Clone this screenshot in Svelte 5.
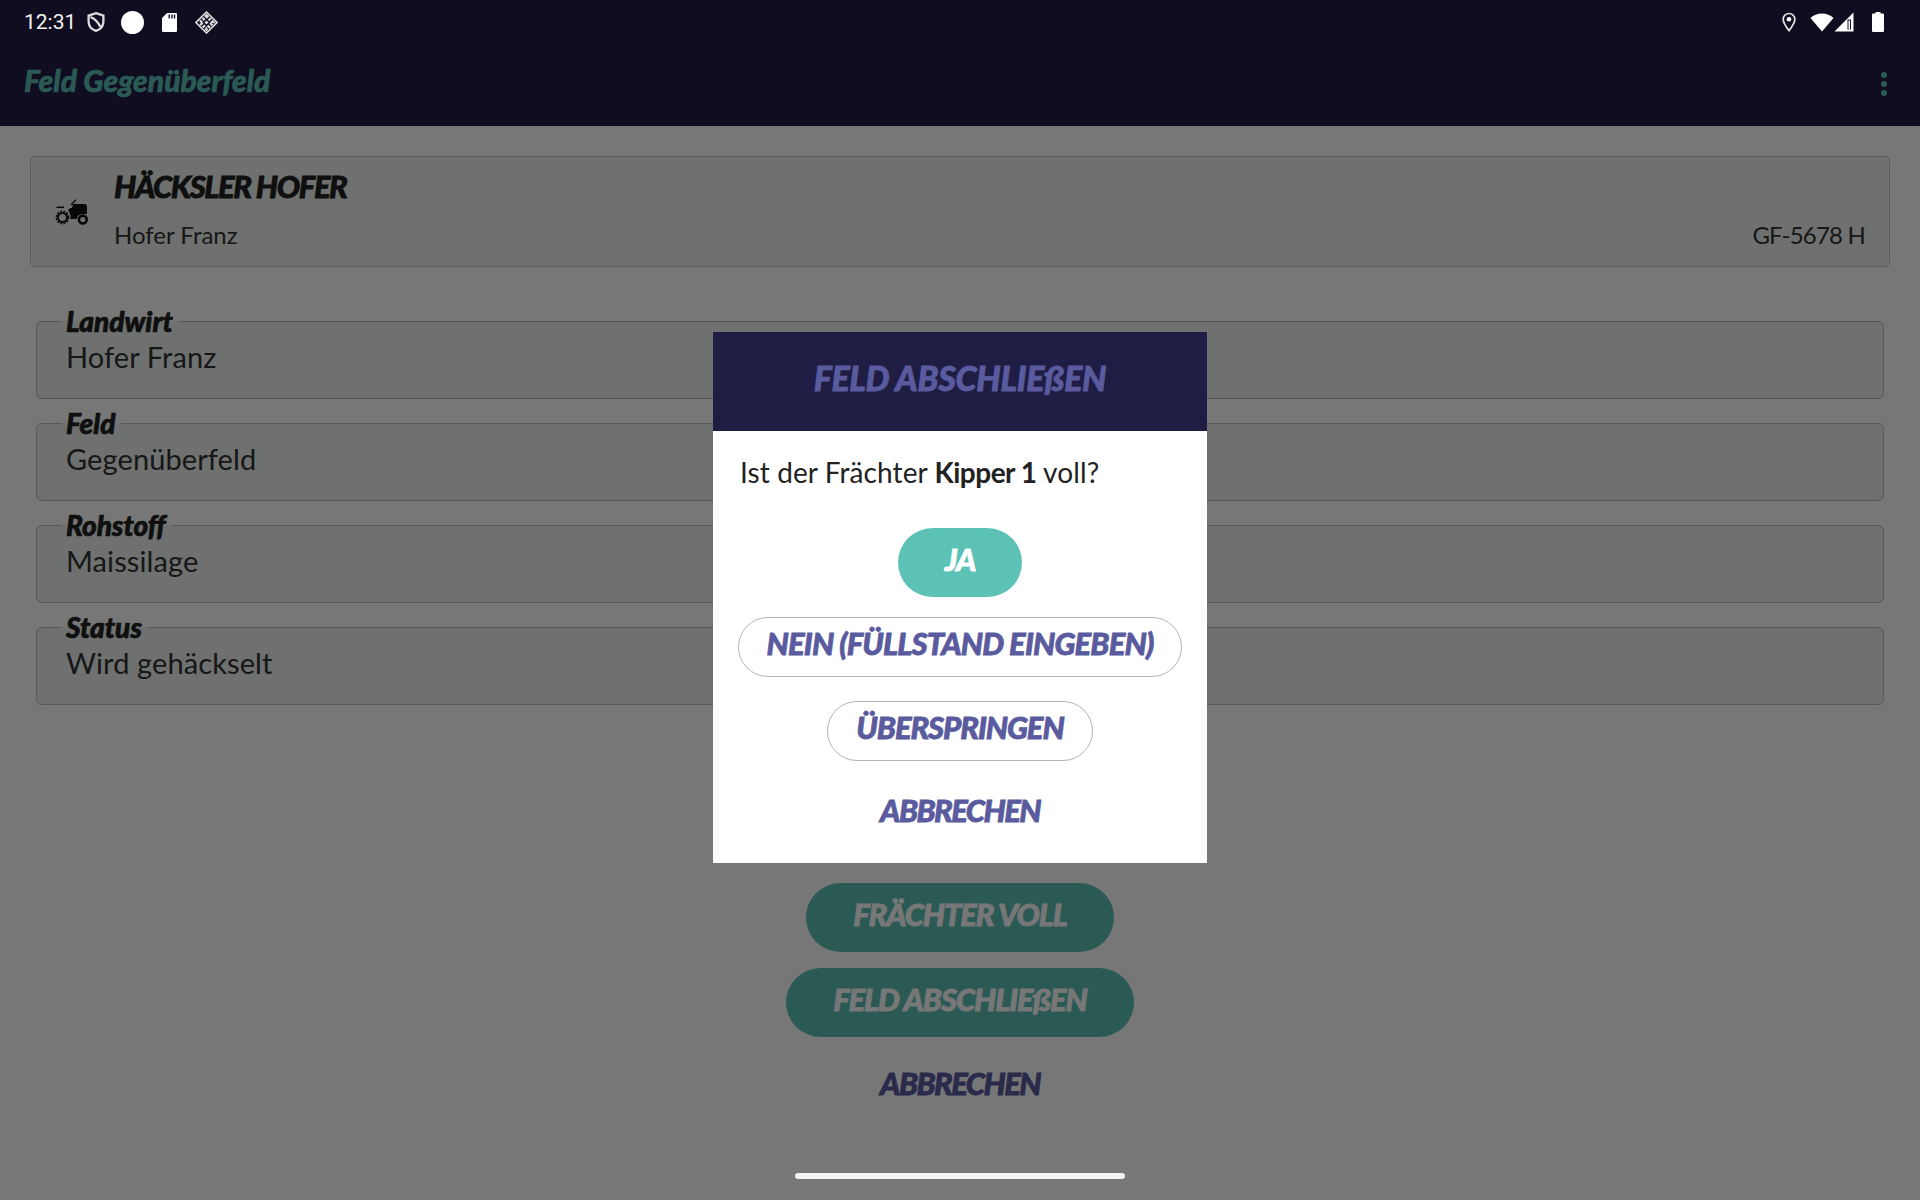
<script>
	const fields = [
		{ label: 'Landwirt', value: 'Hofer Franz' },
		{ label: 'Feld', value: 'Gegenüberfeld' },
		{ label: 'Rohstoff', value: 'Maissilage' },
		{ label: 'Status', value: 'Wird gehäckselt' }
	];
</script>

<div class="screen">
	<div class="status-bar">
		<div class="status-left">
			<span class="time">12:31</span>
			<svg class="ic-shield" viewBox="0 0 18 20" width="18" height="20">
				<path d="M9 1.200 16.400 3.600V9.500C16.400 14 13.500 17.400 9 18.800 4.500 17.400 1.600 14 1.600 9.500V3.600Z" fill="none" stroke="#dcdcdc" stroke-width="2.300" />
				<path d="M3.500 5C7.500 6.500 11 10 13.500 15" fill="none" stroke="#dcdcdc" stroke-width="2.300" />
			</svg>
			<span class="dot"></span>
			<svg class="ic-sd" viewBox="0 0 15 19" width="15" height="19">
				<path d="M5 0H14a1 1 0 0 1 1 1V18a1 1 0 0 1-1 1H1a1 1 0 0 1-1-1V5Z" fill="#fff" />
				<path d="M6.500 1.500h1.400v4H6.500zM9.200 1.500h1.400v4H9.200zM11.800 1.500h1.400v4h-1.400z" fill="#0f0e20" />
			</svg>
			<svg class="ic-diamond" viewBox="0 0 23 23" width="23" height="23">
				<path d="M11.500 1 22 11.500 11.500 22 1 11.500Z" fill="none" stroke="#dcdcdc" stroke-width="1.600" />
				<path d="M11.500 5 18 11.500 11.500 18 5 11.500Z" fill="none" stroke="#dcdcdc" stroke-width="3.400" stroke-dasharray="2.200 1.300" />
				<path d="M10 10h3v3h-3z" fill="#dcdcdc" transform="rotate(45 11.500 11.500)" />
			</svg>
		</div>
		<div class="status-right">
			<svg viewBox="0 0 14 20" width="14" height="20">
				<path d="M7 18.600C3.800 14.600 1.200 11.300 1.200 7.300a5.800 5.800 0 0 1 11.600 0C12.800 11.300 10.200 14.600 7 18.600Z" fill="none" stroke="#e4e4e4" stroke-width="1.700" />
				<circle cx="7" cy="7.300" r="2.300" fill="#fff" />
			</svg>
			<svg class="ic-wifi" viewBox="0 0 24 20" width="24" height="20">
				<path d="M12 19.500 .5 6C3.500 3 7.500 1.400 12 1.400S20.500 3 23.500 6Z" fill="#fff" />
			</svg>
			<svg class="ic-signal" viewBox="0 0 20 20" width="20" height="20">
				<path d="M19.500 .5V19.500H.5Z" fill="#fff" />
				<path d="M13.500 7.500h3.500v10H13.500z" fill="#0f0e20" />
				<path d="M14.500 8.500h1.500v9H14.500z" fill="#fff" />
			</svg>
			<svg class="ic-battery" viewBox="0 0 12 20" width="12" height="20">
				<path d="M3.500 0h5v1.500H11a1 1 0 0 1 1 1V19a1 1 0 0 1-1 1H1a1 1 0 0 1-1-1V2.500a1 1 0 0 1 1-1h2.500Z" fill="#fff" />
			</svg>
		</div>
	</div>

	<header class="app-bar">
		<span class="app-title">Feld Gegenüberfeld</span>
		<span class="menu"><i></i><i></i><i></i></span>
	</header>

	<main class="content">
		<section class="machine-card">
			<svg class="tractor" viewBox="0 0 34 26" width="34" height="26">
				<path d="M16 6 21 .8" stroke="#111" stroke-width="1.300" fill="none" />
				<path d="M1.500 8.300h7.500" stroke="#111" stroke-width="1.500" fill="none" />
				<path d="M18 5h11.500a2.500 2.500 0 0 1 2.500 2.500V15h-4.500a6.500 6.500 0 0 0-6 5H15.500C16 16 14.500 12.500 13 11.500L15 9h2Z" fill="#111" />
				<circle cx="7.500" cy="18.500" r="4.500" fill="none" stroke="#111" stroke-width="2" />
				<circle cx="7.500" cy="18.500" r="6.200" fill="none" stroke="#111" stroke-width="1.400" stroke-dasharray="2 1.250" />
				<circle cx="27.800" cy="20.500" r="3.900" fill="none" stroke="#111" stroke-width="2.600" />
			</svg>
			<div class="machine-body">
				<h2>HÄCKSLER HOFER</h2>
				<div class="machine-row">
					<span>Hofer Franz</span>
					<span class="plate">GF-5678 H</span>
				</div>
			</div>
		</section>

		<div class="fields">
			{#each fields as f}
				<fieldset>
					<legend>{f.label}</legend>
					<div class="value">{f.value}</div>
				</fieldset>
			{/each}
		</div>

		<div class="actions">
			<button class="primary" type="button">FRÄCHTER VOLL</button>
			<button class="primary" type="button">FELD ABSCHLIEßEN</button>
			<button class="link" type="button">ABBRECHEN</button>
		</div>
	</main>

	<div class="scrim">
		<div class="dialog">
			<div class="dialog-head">FELD ABSCHLIEßEN</div>
			<div class="dialog-body">
				<p>Ist der Frächter <b>Kipper 1</b> voll?</p>
				<div class="dialog-actions">
					<button class="primary ja" type="button">JA</button>
					<button class="outline long" type="button">NEIN (FÜLLSTAND EINGEBEN)</button>
					<button class="outline" type="button">ÜBERSPRINGEN</button>
					<button class="link" type="button">ABBRECHEN</button>
				</div>
			</div>
		</div>
	</div>

	<div class="home-bar"></div>
</div>

<style>
	:global(body) {
		margin: 0;
		background: #fff;
	}

	.screen {
		position: relative;
		width: 1920px;
		height: 1200px;
		overflow: hidden;
		font-family: Lato, 'Noto Sans', sans-serif;
		color: #222;
	}

	.status-bar {
		position: absolute;
		top: 0;
		left: 0;
		right: 0;
		height: 44px;
		padding: 0 36px 0 24px;
		display: flex;
		justify-content: space-between;
		align-items: center;
		z-index: 3;
	}

	.status-left,
	.status-right {
		display: flex;
		align-items: center;
	}

	.time {
		font: 21px Roboto, sans-serif;
		color: #f2f2f2;
	}

	.ic-shield {
		margin-left: 11px;
	}

	.dot {
		width: 23px;
		height: 23px;
		margin-left: 16px;
		border-radius: 50%;
		background: #fff;
	}

	.ic-sd {
		margin-left: 18px;
	}

	.ic-diamond {
		margin-left: 18px;
	}

	.ic-wifi {
		margin-left: 14px;
	}

	.ic-battery {
		margin-left: 18px;
	}

	.app-bar {
		height: 126px;
		box-sizing: border-box;
		padding: 62px 33px 0 24px;
		background: #201d44;
		display: flex;
		justify-content: space-between;
	}

	.app-title {
		font-size: 30px;
		font-weight: 900;
		font-style: italic;
		-webkit-text-stroke: 0.6px currentColor;
		color: #5cc2b5;
		line-height: 36px;
	}

	.menu {
		display: flex;
		flex-direction: column;
		gap: 3px;
		padding: 10px 0 0;
	}

	.menu i {
		display: block;
		width: 6px;
		height: 6px;
		border-radius: 50%;
		background: #5cc2b5;
	}

	.content {
		padding: 30px 30px 0;
		display: flex;
		flex-direction: column;
	}

	.machine-card {
		height: 111px;
		box-sizing: border-box;
		display: flex;
		align-items: center;
		background: #ecf2ee;
		border: 1px solid #c6c6c6;
		border-radius: 5px;
		padding: 0 24px;
	}

	.tractor {
		flex: none;
	}

	.machine-body {
		flex: 1;
		margin-left: 25px;
		padding-bottom: 6px;
	}

	h2 {
		margin: 0;
		font-size: 31px;
		font-weight: 900;
		font-style: italic;
		letter-spacing: -1.4px;
		-webkit-text-stroke: 0.8px currentColor;
		line-height: 40px;
		color: #222;
	}

	.machine-row {
		margin-top: 13px;
		display: flex;
		justify-content: space-between;
		font-size: 24px;
		line-height: 32px;
		color: #333;
	}

	.plate {
		letter-spacing: -0.8px;
	}

	.fields {
		margin: 40px 6px 0;
		display: flex;
		flex-direction: column;
		gap: 10px;
	}

	fieldset {
		margin: 0;
		height: 92px;
		box-sizing: border-box;
		padding: 0 29px;
		background: #ecf2ee;
		border: 1px solid #bdbdbd;
		border-radius: 6px;
	}

	legend {
		padding: 0 6px 0 4px;
		margin-left: -4px;
		font-size: 28px;
		line-height: 28px;
		font-weight: 900;
		font-style: italic;
		-webkit-text-stroke: 0.7px currentColor;
		color: #222;
	}

	.value {
		margin-top: 2px;
		font-size: 29px;
		letter-spacing: 0.1px;
		line-height: 40px;
		color: #333;
	}

	.actions {
		margin-top: 178px;
		display: flex;
		flex-direction: column;
		align-items: center;
		gap: 16px;
	}

	button {
		font-family: inherit;
		font-size: 31px;
		font-weight: 900;
		font-style: italic;
		letter-spacing: -1.1px;
		-webkit-text-stroke: 0.8px currentColor;
		border: 0;
		background: none;
		cursor: pointer;
		white-space: nowrap;
	}

	.primary {
		height: 69px;
		padding: 0 47px 7px;
		border-radius: 35px;
		background: #5cc2b5;
		color: #fff;
	}

	.link {
		height: 59px;
		letter-spacing: -1.6px;
		color: #5a5b9e;
	}

	.scrim {
		position: absolute;
		inset: 0;
		z-index: 2;
		background: rgba(0, 0, 0, 0.533);
		display: flex;
		justify-content: center;
		align-items: flex-start;
		padding-top: 332px;
		box-sizing: border-box;
	}

	.dialog {
		width: 494px;
		height: 531px;
		background: #fff;
	}

	.dialog-head {
		height: 99px;
		box-sizing: border-box;
		padding-bottom: 8px;
		background: #201d44;
		color: #5a5b9e;
		display: flex;
		align-items: center;
		justify-content: center;
		font-size: 34px;
		font-weight: 900;
		font-style: italic;
		letter-spacing: -0.3px;
		-webkit-text-stroke: 0.8px currentColor;
	}

	.dialog-body {
		padding: 0 25px;
	}

	p {
		margin: 0;
		padding: 22px 0 0 2px;
		font-size: 28px;
		letter-spacing: 0.1px;
		line-height: 38px;
		color: #222;
	}

	p b {
		font-weight: 700;
		letter-spacing: -0.5px;
	}

	.dialog-actions {
		margin-top: 37px;
		display: flex;
		flex-direction: column;
		align-items: center;
		gap: 20px;
	}

	.ja {
		width: 124px;
		padding: 0 0 7px;
	}

	.outline {
		height: 60px;
		padding: 0 28px 8px;
		border: 1px solid #b4b4b4;
		border-radius: 30px;
		color: #5a5b9e;
	}

	.long {
		letter-spacing: -0.85px;
	}

	.outline + .outline {
		margin-top: 4px;
	}

	.dialog-actions .link {
		height: 60px;
		margin-top: -1px;
	}

	.home-bar {
		position: absolute;
		left: 795px;
		top: 1173px;
		width: 330px;
		height: 6px;
		border-radius: 3px;
		background: #f3f3f3;
		z-index: 3;
	}
</style>
